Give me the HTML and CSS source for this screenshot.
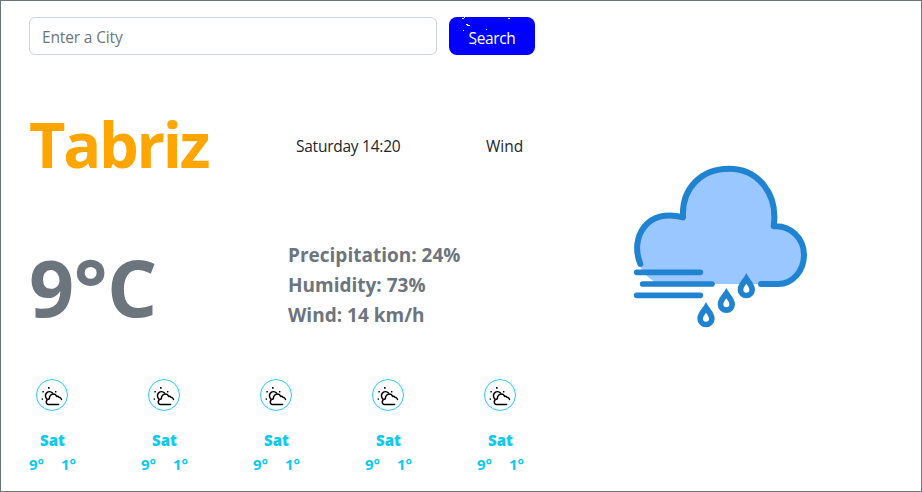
FILE: index.html
```html
<!DOCTYPE html>
<html lang="en">
<head>
<meta charset="utf-8">
<title>Weather</title>
<link rel="stylesheet" href="styles.css">
</head>
<body>
<svg width="0" height="0" class="defs">
  <symbol id="partly" viewBox="0 0 32 32">
    <circle cx="16" cy="16" r="15.5" fill="#fff" stroke="#26cdf0"/>
    <g fill="none" stroke="#000" stroke-width="1.5" stroke-linecap="round" stroke-linejoin="round">
      <path d="M10.6 19.7A4.1 4.1 0 1 1 16.5 14"/>
      <path d="M22.6 25.6H13c-2 0-2.8-1.2-2.7-2.8.1-1.6 1.300-2.600 2.900-2.700.1-3 2-5.300 4.500-5.200 1.400.1 2.400 1.100 3 2.500 1.200-.2 1.800.1 2.300.9 1.400.2 2.300.9 2.500 2.200"/>
    </g>
    <path d="M12 8h1.600v1.800H12zM6.400 12h1.400v1.400H6.400zM5.600 19.400H7v1.400H5.600zM19 12h1.400v1.400H19z"/>
  </symbol>
</svg>
<main class="weather">
  <section class="details">
    <form class="search">
      <input class="city-input" type="text" placeholder="Enter a City">
      <button class="search-button" type="button">Search
        <svg class="sparks" viewBox="0 0 86 38" width="86" height="38"><path fill="#fff" d="M13 1h2v1h-2zM15 0h1v1h-1zM17 7h2v1h-2zM18 8h3v1h-3zM14 13h1v1h-1zM37 12h1v1h-1zM59 1h2v1h-2zM26 27h1v1h-1z"/></svg>
      </button>
    </form>
    <div class="heading">
      <h1 class="city">Tabriz</h1>
      <span class="time">Saturday 14:20</span>
      <span class="condition">Wind</span>
    </div>
    <div class="current">
      <div class="temperature">9°C</div>
      <ul class="metrics">
        <li class="precipitation">Precipitation: 24%</li>
        <li class="humidity">Humidity: 73%</li>
        <li class="wind">Wind: 14 km/h</li>
      </ul>
    </div>
    <div class="forecast">
      <div class="day"><svg class="day-icon"><use href="#partly"/></svg><b>Sat</b><p class="range"><span>9°</span><span>1°</span></p></div>
      <div class="day"><svg class="day-icon"><use href="#partly"/></svg><b>Sat</b><p class="range"><span>9°</span><span>1°</span></p></div>
      <div class="day"><svg class="day-icon"><use href="#partly"/></svg><b>Sat</b><p class="range"><span>9°</span><span>1°</span></p></div>
      <div class="day"><svg class="day-icon"><use href="#partly"/></svg><b>Sat</b><p class="range"><span>9°</span><span>1°</span></p></div>
      <div class="day"><svg class="day-icon"><use href="#partly"/></svg><b>Sat</b><p class="range"><span>9°</span><span>1°</span></p></div>
    </div>
  </section>
  <svg class="cloud" viewBox="0 0 600 540">
    <path fill="#9ac7ff" d="M120 387C85 375 51 340 51 290C51 215 115 165 189 187V170A137 129 0 0 1 464 170L461 214C515 210 552 253 552 300C552 350 520 387 475 387Z"/>
    <g fill="none" stroke="#1f83d1" stroke-width="18" stroke-linecap="round" stroke-linejoin="round">
      <path d="M61 327C28 245 83 158 189 187C184 98 246 41 327 41C413 41 475 115 461 214C511 210 552 250 552 300C552 350 515 387 475 387H423"/>
      <path stroke-width="17" d="M50 352H241M68 387H276M50 421H241"/>
    </g>
    <path fill="#fff" d="M379 386C375 393 371 397 371 404A8 8 0 0 0 387 404C387 397 383 393 379 386Z"/>
    <g fill="#1f83d1">
      <path id="drop" fill-rule="evenodd" d="M379 354C386 370 405 385 405 404A26 26 0 0 1 353 404C353 385 372 370 379 354ZM379 386C375 393 370 397 370 404A9 9 0 0 0 388 404C388 397 383 393 379 386Z"/>
      <use href="#drop" x="-60" y="44"/>
      <use href="#drop" x="-121" y="87"/>
    </g>
  </svg>
</main>
</body>
</html>
```
FILE: styles.css
```css
* { box-sizing: border-box; }
body {
  margin: 0;
  background: #fff;
  color: #212529;
  font: 16px/24px "Open Sans", "Noto Sans", sans-serif;
}
.defs { display: none; }
.weather {
  display: flex;
  height: 492px;
  padding: 16px 28px 0;
  border: 1px solid #6c757d;
}
.details { width: 506px; }
.search { display: flex; gap: 12px; height: 38px; }
.city-input {
  width: 408px;
  padding: 8px 12px 6px;
  border: 1px solid #ced4da;
  border-radius: 6px;
  color: #212529;
  font: inherit;
  font-size: 15.500px;
  letter-spacing: -0.15px;
}
.city-input::placeholder { color: #6c757d; opacity: 1; }
.search-button {
  position: relative;
  width: 86px;
  padding: 3px 0 0;
  border: 0;
  border-radius: 8px;
  background: #00f;
  color: #fff;
  font: inherit;
  font-size: 15.500px;
  letter-spacing: -0.35px;
}
.sparks { position: absolute; top: 0; left: 0; }
.heading { display: flex; align-items: center; height: 182px; }
.city {
  width: 267px;
  margin: 0;
  padding-bottom: 4px;
  color: orange;
  font-size: 63px;
  line-height: 76px;
  letter-spacing: -2.3px;
}
.time { width: 190px; font-size: 15.500px; letter-spacing: -0.25px; }
.condition { font-size: 15.500px; letter-spacing: 0; }
.current { display: flex; align-items: center; height: 96px; color: #6c757d; font-weight: 700; }
.temperature { width: 259px; padding-top: 4px; font-size: 79px; line-height: 96px; letter-spacing: -0.5px; }
.metrics {
  margin: 0;
  padding: 0;
  list-style: none;
  font-size: 19px;
  line-height: 30px;
  letter-spacing: 0;
}
.forecast { display: flex; gap: 65px; margin-top: 46px; color: #0dcaf0; }
.day {
  display: flex;
  flex-direction: column;
  align-items: center;
  width: 47px;
  font-size: 15px;
  font-weight: 700;
}
.day-icon { width: 32px; height: 32px; margin: 0 1px 17px 0; }
.range { display: flex; justify-content: space-between; width: 47px; margin: 0; }
.cloud { width: 200px; height: 180px; margin: 138px 0 0 85px; }
```
